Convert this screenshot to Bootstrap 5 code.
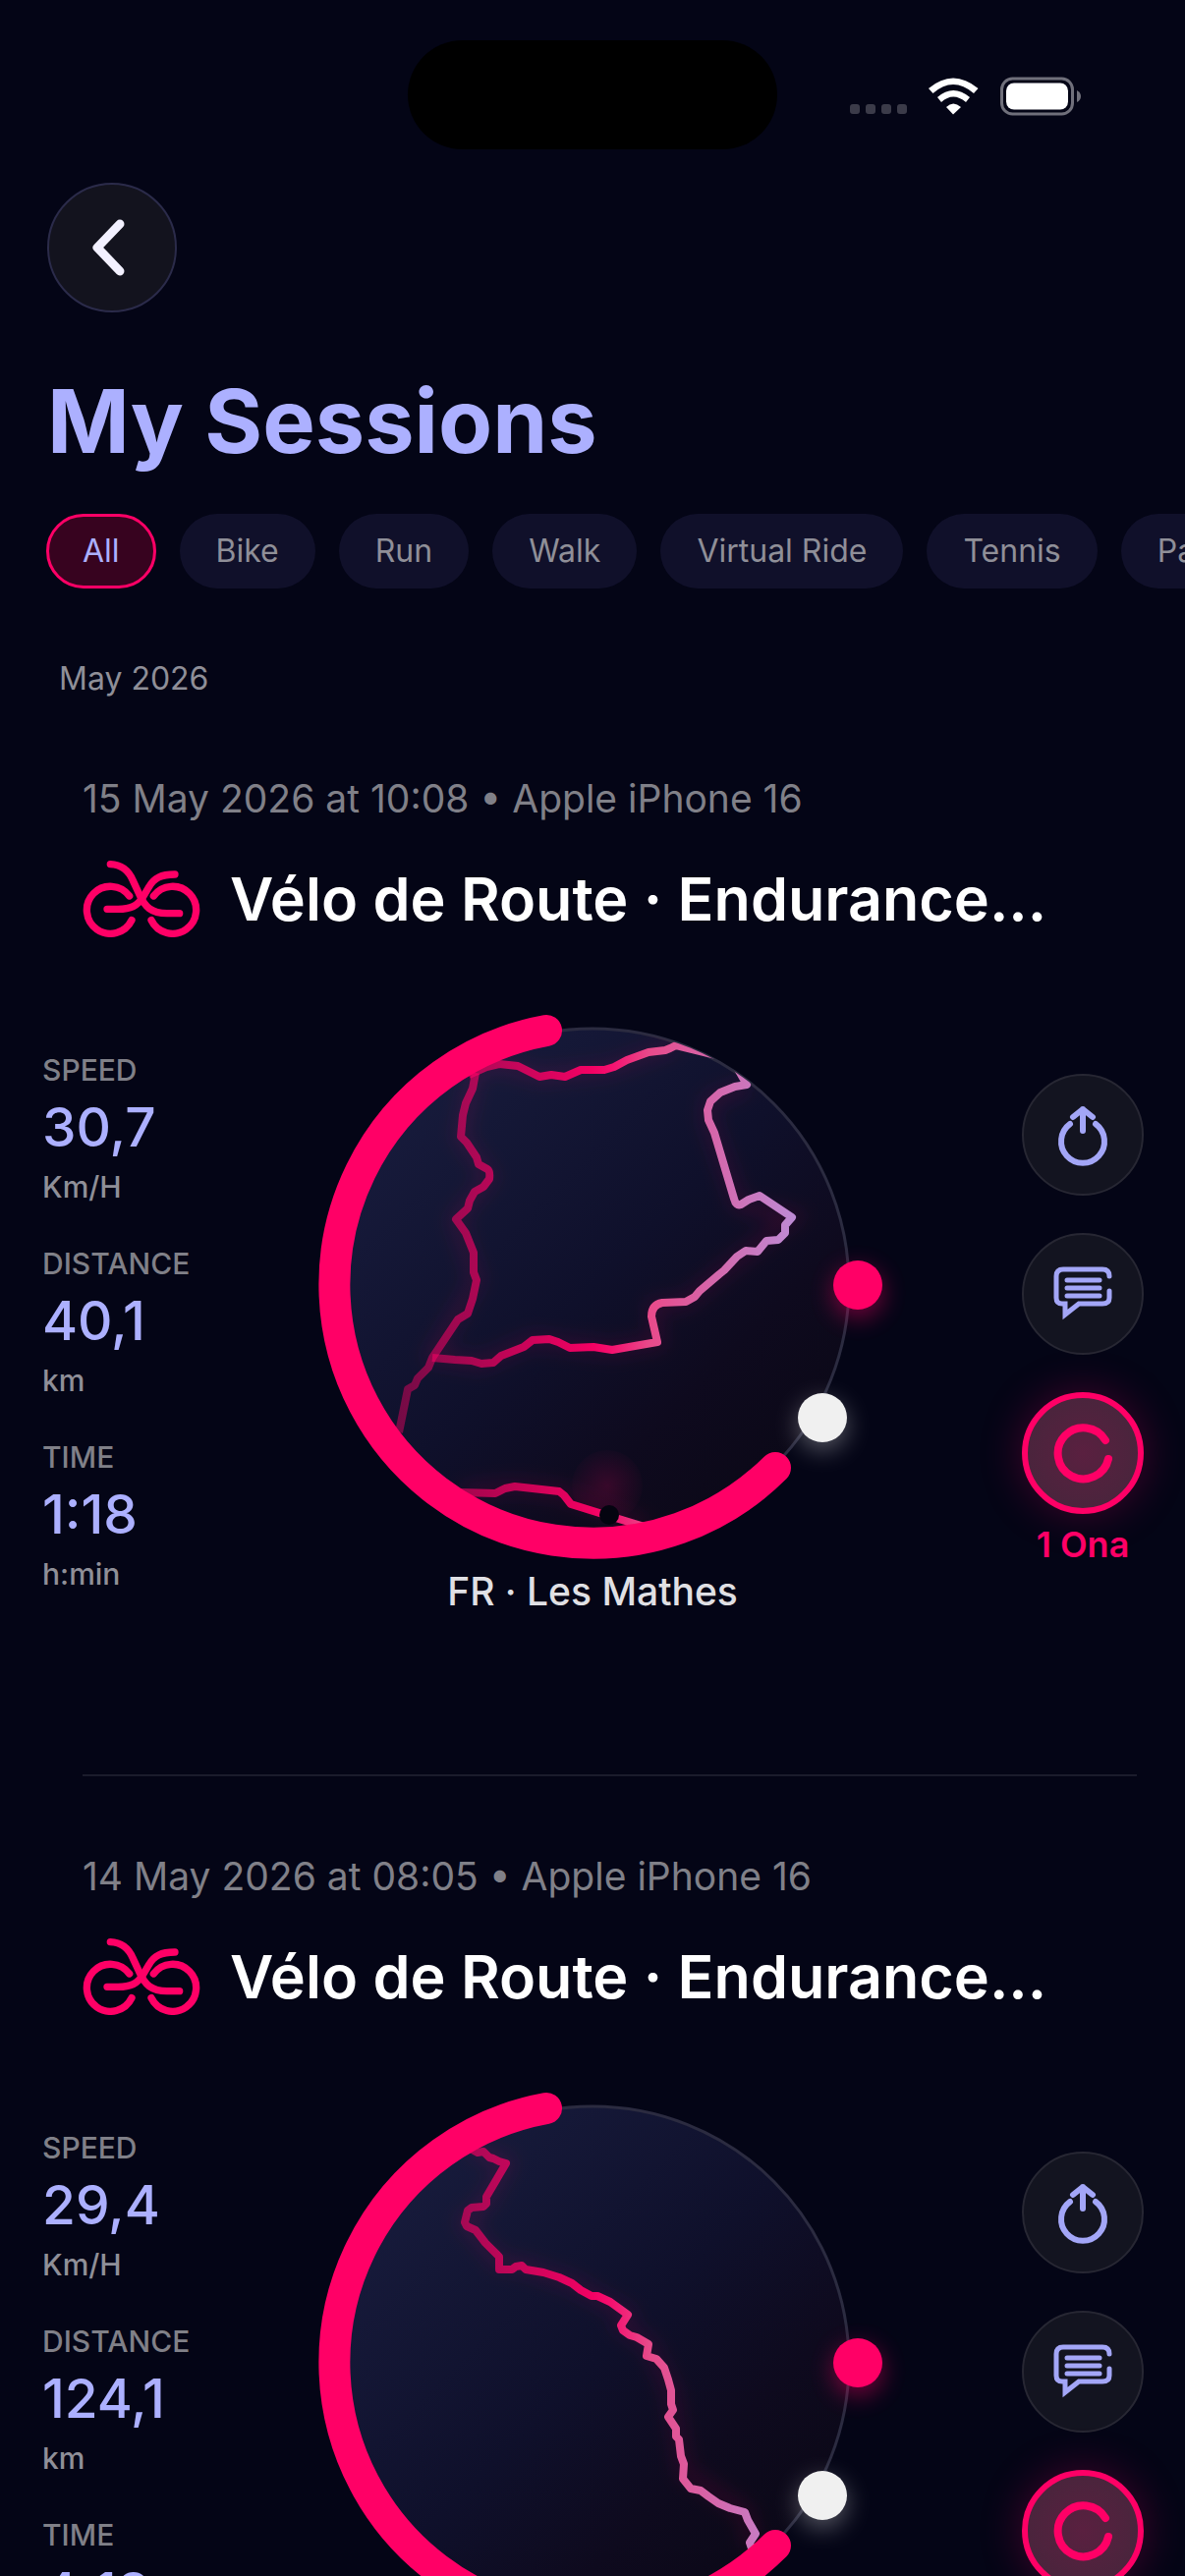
<!DOCTYPE html>
<html lang="en">
<head>
    <meta charset="UTF-8">
    <meta name="viewport" content="width=device-width, initial-scale=1.0">
    <title>My Sessions</title>
    <link rel="stylesheet" href="https://cdn.jsdelivr.net/npm/bootstrap@5.3.0/dist/css/bootstrap.min.css">
    <style>
        :root {
            --pink: #ff0066;
            --lilac: #acb0ff;
            --icon: #a3a6f7;
            --dim: #808088;
        }
        body {
            background: #040516;
            color: #fff;
            font-family: Inter, "Liberation Sans", sans-serif;
        }
        .app {
            scrollbar-width: none;
        }

        /* Status bar */
        .status-bar {
            display: grid;
            grid-template-columns: 1fr auto 1fr;
            padding-top: 41px;
        }
        .island {
            width: 376px;
            height: 111px;
            border-radius: 56px;
            background: #000;
        }
        .status-icons {
            padding-left: 74px;
        }

        /* Header */
        .page-head {
            padding: 34px 48px 0;
        }
        .btn-back {
            width: 132px;
            height: 132px;
            background: #13131e;
            border: 2px solid #2b2b4a;
        }
        .page-title {
            margin: 55px 0 0;
            font-size: 90px;
            line-height: 112px;
            font-weight: 700;
            color: var(--lilac);
        }

        /* Filters */
        .filters {
            gap: 24px;
            margin-top: 38px;
            padding-left: 47px;
            scrollbar-width: none;
        }
        .chip {
            flex: none;
            height: 76px;
            padding: 0 34px;
            border: 3px solid transparent;
            border-radius: 38px;
            background: #10102a;
            color: #8f8f98;
            font-size: 32px;
            line-height: 40px;
        }
        .chip.active {
            background: #37031f;
            border-color: var(--pink);
            color: var(--lilac);
        }
        .month {
            margin: 72px 0 0;
            padding-left: 60px;
            font-size: 32px;
            line-height: 40px;
            font-weight: 400;
            color: #8f8f98;
        }

        /* Session */
        .session {
            padding: 78px 0 162px;
        }
        .session-head {
            padding: 0 84px;
        }
        .session-date {
            font-size: 39px;
            line-height: 48px;
            color: var(--dim);
        }
        .session-name {
            gap: 30px;
            margin-top: 38px;
            height: 80px;
        }
        .session-name h2 {
            font-size: 61px;
            line-height: 80px;
            font-weight: 600;
        }
        .session-body {
            display: grid;
            grid-template-columns: 1fr 600px 1fr;
            margin-top: 53px;
        }
        .stats {
            gap: 35px;
            padding: 61px 0 0 43px;
        }
        .stat-label {
            font-size: 30px;
            line-height: 40px;
            font-weight: 500;
            color: var(--dim);
        }
        .stat-value {
            font-size: 55px;
            line-height: 76px;
            font-weight: 500;
            color: var(--lilac);
        }
        .stat-unit {
            font-size: 30px;
            line-height: 46px;
            font-weight: 500;
            color: #8f8f98;
        }
        .place {
            font-size: 39px;
            line-height: 48px;
            font-weight: 500;
            color: #e0e0e4;
        }
        .actions {
            gap: 38px;
            padding: 85px 42px 0 0;
        }
        .btn-round {
            width: 124px;
            height: 124px;
            background: #131420;
            border: 2px solid #272733;
        }
        .btn-ona {
            background: radial-gradient(circle, #5a2040, #44263b);
            border: 6px solid var(--pink);
            box-shadow: 0 0 44px rgba(255, 0, 102, .25);
        }
        .ona-count {
            width: 124px;
            margin-top: -30px;
            font-size: 36px;
            line-height: 46px;
            font-weight: 600;
            color: var(--pink);
        }
        .divider {
            height: 2px;
            margin: 0 49px 0 84px;
            border: 0;
            background: #1b1c2c;
            opacity: 1;
        }
        .line {
            fill: none;
            stroke: currentColor;
            stroke-linecap: round;
            stroke-linejoin: round;
        }
        .miter {
            stroke-linejoin: miter;
        }
        #ring {
            color: var(--pink);
            overflow: visible;
        }
        .route {
            fill: none;
            stroke: url(#routeFade);
            stroke-width: 8;
            stroke-linejoin: round;
        }
        .route-glow {
            fill: none;
            stroke: var(--pink);
            stroke-width: 14;
            stroke-opacity: .12;
            filter: url(#soft);
        }
    </style>
</head>
<body>
    <!-- Shared icons and gradients -->
    <svg width="0" height="0" class="position-absolute" aria-hidden="true">
        <defs>
            <linearGradient id="disc" x1="0" y1="0" x2="1" y2="1">
                <stop offset="0" stop-color="#1a1f42"/>
                <stop offset=".5" stop-color="#0f102b"/>
                <stop offset=".7" stop-color="#0e0a1e"/>
                <stop offset="1" stop-color="#090712"/>
            </linearGradient>
            <linearGradient id="routeFade" gradientUnits="userSpaceOnUse" x1="-240" y1="0" x2="240" y2="0">
                <stop offset="0" stop-color="#ff0066" stop-opacity=".3"/>
                <stop offset=".5" stop-color="#ff0066" stop-opacity=".95"/>
                <stop offset=".54" stop-color="#f5106f"/>
                <stop offset=".62" stop-color="#e84a8a"/>
                <stop offset="1" stop-color="#b49ae6"/>
            </linearGradient>
            <radialGradient id="pinGlow">
                <stop offset="0" stop-color="#ff0066" stop-opacity=".17"/>
                <stop offset="1" stop-color="#ff0066" stop-opacity=".02"/>
            </radialGradient>
            <filter id="soft" filterUnits="userSpaceOnUse" x="-300" y="-300" width="600" height="600"><feGaussianBlur stdDeviation="9"/></filter>
            <filter id="dotBlur" x="-1" y="-1" width="3" height="3"><feGaussianBlur stdDeviation="12"/></filter>
            <clipPath id="discClip"><circle r="261"/></clipPath>
        </defs>
        <symbol id="bike" viewBox="72 75 360 234">
            <g class="line" stroke-width="22">
                <path d="M215 183A72 72 0 1 0 222 257"/>
                <path d="M289 183A72 72 0 1 1 282 257"/>
                <path d="M157 86C192 87 213 106 226 136L245 177C262 216 282 236 330 236H368"/>
                <path d="M354 117C312 117 290 128 275 155L259 182C240 215 218 223 180 223H147"/>
            </g>
        </symbol>
        <symbol id="share" viewBox="-32 -32 64 64">
            <g class="line" stroke-width="6">
                <path d="M-13 -11A22 22 0 1 0 13 -11"/>
                <path d="M0 -26V-4M-10 -18L0 -26L10 -18"/>
            </g>
        </symbol>
        <symbol id="comment" viewBox="-32 -32 64 64">
            <path class="line miter" stroke-width="5" d="M27 -18Q27 -25 20 -25H-20Q-27 -25 -27 -18V4Q-27 10 -21 10H-18V21L-4 10H20Q27 10 27 4V-3"/>
            <path class="line" stroke-width="5" d="M-16 -14H17M-16 -6H17M-16 2H17"/>
        </symbol>
        <symbol id="ona" viewBox="-32 -32 64 64">
            <path class="line" stroke-width="8" d="M23 -13A26 26 0 1 0 26 6"/>
        </symbol>
        <symbol id="ring" viewBox="-300 -300 600 588">
            <path class="line" stroke-width="32" d="M-47 -259A263 263 0 1 0 186 186"/>
            <circle cx="270" cy="8" r="25" fill="#ff0066" opacity=".45" filter="url(#dotBlur)"/>
            <circle cx="270" cy="0" r="25" fill="#ff0066"/>
            <circle cx="234" cy="143" r="25" fill="#fff" opacity=".32" filter="url(#dotBlur)"/>
            <circle cx="234" cy="135" r="25" fill="#f0f0f0"/>
        </symbol>
    </svg>

    <div class="app vh-100 overflow-auto">
        <!-- Status bar -->
        <div class="status-bar">
            <div></div>
            <div class="island"></div>
            <div class="status-icons d-flex align-items-center">
                <svg width="236" height="42" viewBox="0 0 236 42" aria-hidden="true">
                    <g fill="#3b3b49">
                        <rect x="0" y="30" width="10" height="10" rx="3"/>
                        <rect x="16" y="30" width="10" height="10" rx="3"/>
                        <rect x="32" y="30" width="10" height="10" rx="3"/>
                        <rect x="48" y="30" width="10" height="10" rx="3"/>
                    </g>
                    <g fill="#fff">
                        <path d="M105 40.500L98 33Q105 26 113 33Z"/>
                        <path d="M93 28Q105 17 118 28L122 23Q105 9 89 23Z"/>
                        <path d="M84.500 19Q105 1 126 19L130.500 14Q105 -7 80 14Z"/>
                    </g>
                    <rect x="154.500" y="4" width="72" height="36" rx="11" fill="none" stroke="#70707b" stroke-width="3"/>
                    <rect x="159" y="8.500" width="63" height="27" rx="8" fill="#fff"/>
                    <path d="M231 16Q235 18 235 22T231 28Z" fill="#70707b"/>
                </svg>
            </div>
        </div>

        <!-- Header -->
        <header class="page-head">
            <button type="button" class="btn btn-back rounded-circle d-flex align-items-center justify-content-center p-0" aria-label="Back">
                <svg class="me-2" width="40" height="64" viewBox="0 0 40 64"><path d="M32 8L9 32L32 56" fill="none" stroke="#f2f0ff" stroke-width="9" stroke-linecap="round" stroke-linejoin="round"/></svg>
            </button>
            <h1 class="page-title">My Sessions</h1>
        </header>

        <!-- Filters -->
        <nav class="filters d-flex overflow-auto" aria-label="Activity">
            <button type="button" class="btn chip active">All</button>
            <button type="button" class="btn chip">Bike</button>
            <button type="button" class="btn chip">Run</button>
            <button type="button" class="btn chip">Walk</button>
            <button type="button" class="btn chip">Virtual Ride</button>
            <button type="button" class="btn chip">Tennis</button>
            <button type="button" class="btn chip">Padel</button>
        </nav>

        <main>
            <h2 class="month">May 2026</h2>

            <!-- 15 May -->
            <article class="session">
                <div class="session-head">
                    <div class="session-date">15 May 2026 at 10:08 • Apple iPhone 16</div>
                    <div class="session-name d-flex align-items-center">
                        <svg width="120" height="78" style="color: var(--pink)" aria-hidden="true"><use href="#bike"/></svg>
                        <h2 class="m-0 text-nowrap">Vélo de Route · Endurance...</h2>
                    </div>
                </div>
                <div class="session-body">
                    <div class="stats d-flex flex-column">
                        <div>
                            <div class="stat-label">SPEED</div>
                            <div class="stat-value">30,7</div>
                            <div class="stat-unit">Km/H</div>
                        </div>
                        <div>
                            <div class="stat-label">DISTANCE</div>
                            <div class="stat-value">40,1</div>
                            <div class="stat-unit">km</div>
                        </div>
                        <div>
                            <div class="stat-label">TIME</div>
                            <div class="stat-value">1:18</div>
                            <div class="stat-unit">h:min</div>
                        </div>
                    </div>
                    <div class="text-center">
                        <svg class="d-block overflow-visible" width="600" height="588" viewBox="-300 -300 600 588" role="img" aria-label="Route map">
                            <circle r="261" fill="url(#disc)" stroke="#2b2b40" stroke-width="3"/>
                            <g clip-path="url(#discClip)">
                                <path class="route-glow" d="M-120 -218L-95 -225L-54 -212L17 -220L85 -245M157 -203L120 -188L118 -168L149 -82L203 -69L134 -15L95 17L62 22L66 58L20 66L-61 56L-113 80L-163 72L-118 -5L-139 -67L-105 -110L-134 -151L-120 -216M-133 211L-79 205L-34 210L53 244"/>
                                <path class="route" d="M-126 -214L-108 -222L-95 -225L-76 -223L-54 -212L-42 -214L-28 -212L-12 -219L12 -219L22 -222L35 -229L57 -237L74 -239L79 -241L85 -244L126 -234L160 -250L140 -234L157 -204L145 -202L130 -196L120 -187L117 -178L118 -168L124 -155L144 -88Q146 -80 151 -82L159 -87L170 -91L203 -69L196 -61L196 -53L189 -46L177 -45L168 -34L156 -35L147 -29L134 -15L129 -11L109 6L104 12L95 17L71 18Q60 20 60 32L66 58L20 66L1 63L-23 64L-35 58L-44 55L-61 56L-70 63L-93 72L-101 79L-113 80L-123 77L-140 76L-163 74"/>
                                <path class="route" d="M-119 -216L-122 -200L-129 -185L-132 -173L-134 -151L-128 -145L-118 -130L-116 -123L-107 -118Q-104 -116 -105 -108L-111 -100L-120 -95L-125 -86L-127 -78L-139 -67L-129 -53L-121 -33L-121 -13L-118 -5L-122 14L-127 29L-137 35L-147 50L-163 74L-167 84L-178 95L-181 102L-188 106L-197 150"/>
                                <path class="route" d="M-135 211L-99 212L-89 207L-79 205L-34 210L-29 214L-22 223L7 232L53 246"/>
                                <circle cx="15" cy="204" r="36" fill="url(#pinGlow)"/>
                            </g>
                            <circle cx="17" cy="234" r="10" fill="#040410"/>
                            <use href="#ring" x="-300" y="-300" width="600" height="588"/>
                        </svg>
                        <div class="place">FR · Les Mathes</div>
                    </div>
                    <div class="actions d-flex flex-column align-items-end">
                        <button type="button" class="btn btn-round rounded-circle p-0" aria-label="Share"><svg width="64" height="64" style="color: var(--icon)"><use href="#share"/></svg></button>
                        <button type="button" class="btn btn-round rounded-circle p-0" aria-label="Comments"><svg width="64" height="64" style="color: var(--icon)"><use href="#comment"/></svg></button>
                        <button type="button" class="btn btn-round btn-ona rounded-circle p-0" aria-label="Ona"><svg width="64" height="64" style="color: var(--pink)"><use href="#ona"/></svg></button>
                        <div class="ona-count text-center text-nowrap">1 Ona</div>
                    </div>
                </div>
            </article>

            <hr class="divider">

            <!-- 14 May -->
            <article class="session">
                <div class="session-head">
                    <div class="session-date">14 May 2026 at 08:05 • Apple iPhone 16</div>
                    <div class="session-name d-flex align-items-center">
                        <svg width="120" height="78" style="color: var(--pink)" aria-hidden="true"><use href="#bike"/></svg>
                        <h2 class="m-0 text-nowrap">Vélo de Route · Endurance...</h2>
                    </div>
                </div>
                <div class="session-body">
                    <div class="stats d-flex flex-column">
                        <div>
                            <div class="stat-label">SPEED</div>
                            <div class="stat-value">29,4</div>
                            <div class="stat-unit">Km/H</div>
                        </div>
                        <div>
                            <div class="stat-label">DISTANCE</div>
                            <div class="stat-value">124,1</div>
                            <div class="stat-unit">km</div>
                        </div>
                        <div>
                            <div class="stat-label">TIME</div>
                            <div class="stat-value">4:18</div>
                            <div class="stat-unit">h:min</div>
                        </div>
                    </div>
                    <div class="text-center">
                        <svg class="d-block overflow-visible" width="600" height="588" viewBox="-300 -300 600 588" role="img" aria-label="Route map">
                            <circle r="261" fill="url(#disc)" stroke="#2b2b40" stroke-width="3"/>
                            <g clip-path="url(#discClip)">
                                <path class="route-glow" d="M-123 -218L-88 -203L-108 -165L-130 -143L-95 -102L-72 -99L-21 -81L36 -49L29 -38L57 -19L80 28L93 110L155 152L163 188"/>
                                <path class="route" d="M-126 -219L-117 -214L-111 -215L-105 -209L-101 -208L-95 -205L-88 -203L-108 -169L-108 -162L-111 -159L-123 -158L-127 -155L-130 -143L-128 -139L-119 -135L-109 -122L-95 -108L-95 -102L-95 -95L-82 -95L-78 -98L-72 -99L-68 -95L-50 -92L-34 -87L-21 -81L-12 -74L-1 -68L5 -68L18 -62L36 -49L29 -38L31 -33L38 -28L45 -26L57 -19L55 -7L65 -4L73 5L77 17L80 28L80 42L82 48L77 55L85 67L85 75L88 78L90 95L93 103L92 118L100 128L110 130L118 136L128 143L140 148L155 152L158 160L166 174L160 183L163 192"/>
                            </g>
                            <use href="#ring" x="-300" y="-300" width="600" height="588"/>
                        </svg>
                        <div class="place">FR · Les Mathes</div>
                    </div>
                    <div class="actions d-flex flex-column align-items-end">
                        <button type="button" class="btn btn-round rounded-circle p-0" aria-label="Share"><svg width="64" height="64" style="color: var(--icon)"><use href="#share"/></svg></button>
                        <button type="button" class="btn btn-round rounded-circle p-0" aria-label="Comments"><svg width="64" height="64" style="color: var(--icon)"><use href="#comment"/></svg></button>
                        <button type="button" class="btn btn-round btn-ona rounded-circle p-0" aria-label="Ona"><svg width="64" height="64" style="color: var(--pink)"><use href="#ona"/></svg></button>
                        <div class="ona-count text-center text-nowrap">1 Ona</div>
                    </div>
                </div>
            </article>
        </main>
    </div>

    <script src="https://cdn.jsdelivr.net/npm/bootstrap@5.3.0/dist/js/bootstrap.bundle.min.js"></script>
</body>
</html>
